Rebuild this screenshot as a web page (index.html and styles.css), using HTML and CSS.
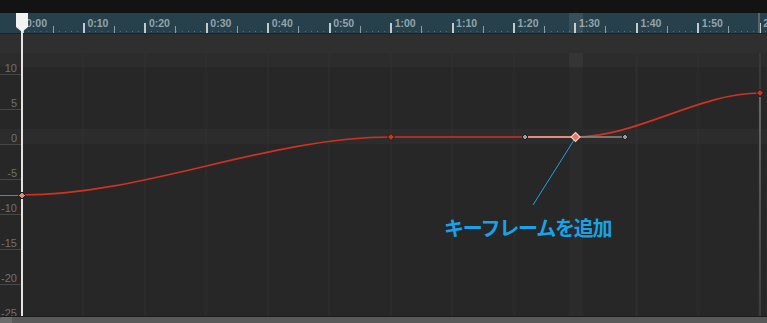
FILE: index.html
```html
<!DOCTYPE html>
<html lang="ja">
<head>
  <meta charset="UTF-8">
  <meta name="viewport" content="width=device-width, initial-scale=1.0">
  <title>Graph Editor</title>
  <link rel="stylesheet" href="styles.css">
</head>
<body>
  <main class="editor">
    <div class="topbar"></div>

    <div class="ruler">
      <div class="sec"><span class="time">0:00</span></div>
      <div class="sec"><span class="time">0:10</span></div>
      <div class="sec"><span class="time">0:20</span></div>
      <div class="sec"><span class="time">0:30</span></div>
      <div class="sec"><span class="time">0:40</span></div>
      <div class="sec"><span class="time">0:50</span></div>
      <div class="sec"><span class="time">1:00</span></div>
      <div class="sec"><span class="time">1:10</span></div>
      <div class="sec"><span class="time">1:20</span></div>
      <div class="sec"><span class="time">1:30</span></div>
      <div class="sec"><span class="time">1:40</span></div>
      <div class="sec"><span class="time">1:50</span></div>
      <div class="sec"><span class="time">2:00</span></div>
      <div class="hover-mark"></div>
      <div class="end-mark"></div>
    </div>

    <div class="track-band"></div>

    <div class="graph">
      <div class="axis">
        <div class="axis-list">
          <div class="axis-row">10</div>
          <div class="axis-row">5</div>
          <div class="axis-row">0</div>
          <div class="axis-row">-5</div>
          <div class="axis-row">-10</div>
          <div class="axis-row">-15</div>
          <div class="axis-row">-20</div>
          <div class="axis-row">-25</div>
        </div>
      </div>
      <div class="plot"></div>

      <!-- curve, handles and keyframes, drawn in page coordinates -->
      <svg class="curve" width="767" height="263" viewBox="0 53 767 263">
        <defs>
          <linearGradient id="endFade" x1="0" y1="0" x2="0" y2="1">
            <stop offset="0" stop-color="#676767" />
            <stop offset="1" stop-color="#3c3c3c" />
          </linearGradient>
        </defs>
        <rect x="569" y="53" width="14" height="263" fill="#2b2b2b" />
        <rect x="569" y="53" width="14" height="14" fill="#353535" />

        <line x1="760" y1="53" x2="760" y2="89" stroke="#383838" stroke-width="2" />
        <rect x="759" y="97" width="2" height="219" fill="url(#endFade)" />

        <line x1="0" y1="195.5" x2="21" y2="195.5" stroke="#7a7a7a" stroke-width="1" />

        <path d="M22 195 C145 195 268 137 391 137 L575 137 C637 137 699 93 760 93"
              fill="none" stroke="#cf3220" stroke-width="1.7" />
        <line x1="525" y1="137" x2="575" y2="137" stroke="#e38b7e" stroke-width="2" />
        <line x1="575" y1="137" x2="625" y2="137" stroke="#8d8d8d" stroke-width="1.6" />

        <line x1="574" y1="140" x2="533" y2="205" stroke="#1aa2e6" stroke-width="1" />

        <path d="M22 192 L25.5 195.5 L22 199 L18.5 195.5 Z" fill="#e08a7c" stroke="#1b1b1b" stroke-width="1" />
        <path d="M391 133.5 L394.5 137 L391 140.5 L387.5 137 Z" fill="#d13422" stroke="#1b1b1b" stroke-width="1" />
        <path d="M760 89.5 L763.5 93 L760 96.5 L756.5 93 Z" fill="#d13422" stroke="#1b1b1b" stroke-width="1" />
        <path d="M525 134 L528 137 L525 140 L522 137 Z" fill="#9a9a9a" stroke="#1f1f1f" stroke-width="1" />
        <path d="M625 134 L628 137 L625 140 L622 137 Z" fill="#9a9a9a" stroke="#1f1f1f" stroke-width="1" />
        <path d="M575.5 132.5 L580 137 L575.5 141.5 L571 137 Z" fill="#e07b6c" stroke="#f6c8bd" stroke-width="1.2" />
      </svg>

      <div class="callout">キーフレームを追加</div>
    </div>

    <div class="scrollbar"></div>

    <div class="playhead">
      <svg class="playhead-head" width="12" height="20" viewBox="0 0 12 20">
        <path d="M0 0 H12 V14 L6 19 L0 14 Z" fill="#f2f2f2" />
      </svg>
    </div>
  </main>
</body>
</html>
```

FILE: styles.css
```css
html, body { height: 100%; }

body {
  margin: 0;
  background-color: #272727;
  font-family: "Liberation Sans", Arial, sans-serif;
  overflow: hidden;
}

.editor {
  position: relative;
  width: 767px;
  height: 323px;
  display: flex;
  flex-direction: column;
  overflow: hidden;
}

.topbar {
  height: 13px;
  background-color: #131313;
  flex: none;
}

.ruler {
  position: relative;
  height: 20px;
  flex: none;
  display: flex;
  padding-left: 22px;
  background-color: #27414c;
  border-bottom: 1px solid #1b262b;
  overflow: hidden;
}

.sec {
  position: relative;
  flex: none;
  width: 61.45px;
  height: 100%;
  background-image: linear-gradient(to right, #5f7783 1px, transparent 1px);
  background-size: 6.145px 1px;
  background-position: 0 18px;
  background-repeat: repeat-x;
}

.sec::before {
  content: "";
  position: absolute;
  left: -0.5px;
  bottom: 0;
  width: 2px;
  height: 10px;
  background-color: #c3cacd;
}

.sec::after {
  content: "";
  position: absolute;
  left: 30.5px;
  bottom: 0;
  width: 1px;
  height: 7px;
  background-color: #8a9ca4;
}

.time {
  display: block;
  padding-left: 4px;
  font-size: 10.5px;
  font-weight: bold;
  line-height: 20px;
  color: #93a3aa;
}

.hover-mark {
  position: absolute;
  left: 569px;
  top: 0;
  width: 14px;
  height: 100%;
  background-color: rgba(255, 255, 255, 0.08);
}

.end-mark {
  position: absolute;
  left: 758px;
  top: 0;
  width: 2px;
  height: 100%;
  background-color: #56656b;
}

.track-band {
  height: 19px;
  flex: none;
  background-color: #2f2f2f;
}

.graph {
  position: relative;
  height: 263px;
  flex: none;
  display: flex;
  background-color: #272727;
  background-image: linear-gradient(to bottom,
    #2c2c2c 0 14px, transparent 14px 76px,
    #2c2c2c 76px 91px, transparent 91px);
}

.axis {
  width: 22px;
  flex: none;
  overflow: hidden;
}

.axis-list {
  margin-top: -13px;
}

.axis-row {
  box-sizing: border-box;
  height: 35px;
  display: flex;
  align-items: flex-end;
  justify-content: flex-end;
  padding-right: 5px;
  border-bottom: 1px solid #474747;
  font-size: 11px;
  line-height: 11px;
  color: #707070;
}

.plot {
  flex: 1;
  background-image: repeating-linear-gradient(to right,
    #2f2f2f 0 1px, transparent 1px 61.45px);
  background-position: -0.5px 0;
}

.curve {
  position: absolute;
  left: 0;
  top: 0;
  z-index: 2;
}

.callout {
  position: absolute;
  left: 444px;
  top: 163px;
  z-index: 3;
  font-family: "Noto Sans CJK JP", sans-serif;
  font-size: 20px;
  font-weight: bold;
  letter-spacing: -1.2px;
  line-height: 24px;
  color: #18a3e8;
  white-space: nowrap;
}

.scrollbar {
  position: relative;
  height: 6px;
  flex: none;
  background-color: #595959;
  border-top: 1px solid #1c1c1c;
}

.scrollbar::before {
  content: "";
  position: absolute;
  left: 0;
  top: 0;
  width: 12px;
  height: 100%;
  border-top-left-radius: 3px;
  background-color: #6c6c6c;
}

.playhead {
  position: absolute;
  left: 21px;
  top: 13px;
  width: 2px;
  height: 303px;
  background-color: #e4e4e4;
  z-index: 1;
}

.playhead-head {
  position: absolute;
  left: -5px;
  top: 0;
  display: block;
}
```
